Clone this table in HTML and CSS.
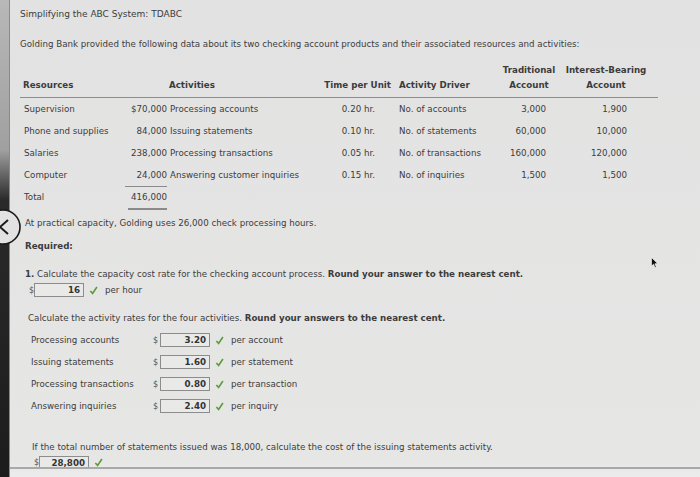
FILE: index.html
```html
<!DOCTYPE html>
<html>
<head>
<meta charset="utf-8">
<link rel="stylesheet" href="styles.css">
</head>
<body>
<div class="screen">
  <div class="edge"></div>
  <div class="page">
    <div class="title">Simplifying the ABC System: TDABC</div>
    <div class="intro">Golding Bank provided the following data about its two checking account products and their associated resources and activities:</div>

    <div class="data">
      <div class="head">
        <div class="h res"></div><div class="h amt"></div><div class="h act"></div><div class="h time"></div><div class="h drv"></div>
        <div class="h trad">Traditional</div><div class="h int">Interest-Bearing</div>
        <div class="h res">Resources</div><div class="h amt"></div><div class="h act c">Activities</div><div class="h time">Time per Unit</div><div class="h drv">Activity Driver</div>
        <div class="h trad">Account</div><div class="h int">Account</div>
      </div>
      <div class="row"><div class="res">Supervision</div><div class="amt">$70,000</div><div class="act">Processing accounts</div><div class="time">0.20 hr.</div><div class="drv">No. of accounts</div><div class="trad">3,000</div><div class="int">1,900</div></div>
      <div class="row"><div class="res">Phone and supplies</div><div class="amt">84,000</div><div class="act">Issuing statements</div><div class="time">0.10 hr.</div><div class="drv">No. of statements</div><div class="trad">60,000</div><div class="int">10,000</div></div>
      <div class="row"><div class="res">Salaries</div><div class="amt">238,000</div><div class="act">Processing transactions</div><div class="time">0.05 hr.</div><div class="drv">No. of transactions</div><div class="trad">160,000</div><div class="int">120,000</div></div>
      <div class="row"><div class="res">Computer</div><div class="amt"><span class="under">24,000</span></div><div class="act">Answering customer inquiries</div><div class="time">0.15 hr.</div><div class="drv">No. of inquiries</div><div class="trad">1,500</div><div class="int">1,500</div></div>
      <div class="row total"><div class="res">Total</div><div class="amt"><span class="dbl">416,000</span></div></div>
    </div>

    <div class="para p1">At practical capacity, Golding uses 26,000 check processing hours.</div>
    <div class="para req"><b>Required:</b></div>
    <div class="para q1"><b>1.</b> Calculate the capacity cost rate for the checking account process. <b>Round your answer to the nearest cent.</b></div>
    <div class="answer a1"><span class="dollar">$</span><span class="box">16</span><svg class="chk" viewBox="0 0 10 10"><path d="M1.5 5.5 L4 8.2 L8.8 1.2"/></svg><span class="unit">per hour</span></div>

    <div class="para q2">Calculate the activity rates for the four activities. <b>Round your answers to the nearest cent.</b></div>
    <div class="rates">
      <div class="rate"><span class="rl">Processing accounts</span><span class="dollar">$</span><span class="box">3.20</span><svg class="chk" viewBox="0 0 10 10"><path d="M1.5 5.5 L4 8.2 L8.8 1.2"/></svg><span class="unit">per account</span></div>
      <div class="rate"><span class="rl">Issuing statements</span><span class="dollar">$</span><span class="box">1.60</span><svg class="chk" viewBox="0 0 10 10"><path d="M1.5 5.5 L4 8.2 L8.8 1.2"/></svg><span class="unit">per statement</span></div>
      <div class="rate"><span class="rl">Processing transactions</span><span class="dollar">$</span><span class="box">0.80</span><svg class="chk" viewBox="0 0 10 10"><path d="M1.5 5.5 L4 8.2 L8.8 1.2"/></svg><span class="unit">per transaction</span></div>
      <div class="rate"><span class="rl">Answering inquiries</span><span class="dollar">$</span><span class="box">2.40</span><svg class="chk" viewBox="0 0 10 10"><path d="M1.5 5.5 L4 8.2 L8.8 1.2"/></svg><span class="unit">per inquiry</span></div>
    </div>

    <div class="para q3">If the total number of statements issued was 18,000, calculate the cost of the issuing statements activity.</div>
    <div class="answer a3"><span class="dollar">$</span><span class="box">28,800</span><svg class="chk" viewBox="0 0 10 10"><path d="M1.5 5.5 L4 8.2 L8.8 1.2"/></svg></div>
  </div>
  <svg class="backbtn" viewBox="0 0 40 44"><circle cx="4" cy="22" r="17"/><path d="M9 15 L1 22 L9 29"/></svg>
  <svg class="cursor" viewBox="0 0 8 12"><path d="M0.5 0.5 L0.5 9 L2.6 7.2 L4 10.5 L5.3 9.9 L3.9 6.8 L6.6 6.6 Z"/></svg>
</div>
</body>
</html>
```
FILE: styles.css
```css
html, body {
  margin: 0;
  padding: 0;
}
body {
  width: 700px;
  height: 477px;
  overflow: hidden;
  background: #e4e4e3;
  font-family: "DejaVu Sans", Verdana, sans-serif;
  font-size: 8.7px;
  color: #3c3c3c;
}
.screen {
  position: relative;
  display: flex;
  width: 700px;
  height: 477px;
  background: linear-gradient(to bottom, #e2e2e2 0, #e6e6e5 460px, #ececec 477px);
}
.edge {
  width: 9px;
  flex: none;
  background: linear-gradient(to bottom, #b8b8b8 0, #a0a0a0 150px, #2a2a2a 200px, #1c1c1c 100%);
  border-right: 1px solid #8a8a8a;
}
.page {
  flex: 1;
  height: 469px;
  padding: 6px 0 0 10px;
  box-sizing: border-box;
  border-bottom: 2px solid #a9a9a9;
  overflow: hidden;
}
.title {
  font-size: 9px;
  line-height: 16px;
}
.intro {
  margin-top: 14px;
  line-height: 16px;
}
.data {
  margin-top: 11px;
  width: 638px;
}
.head {
  display: grid;
  grid-template-columns: 100px 47px 155px 72px 104px 62px 92px;
  grid-auto-rows: 15px;
  line-height: 15px;
  padding-bottom: 4px;
  border-bottom: 1.5px solid #8d8d8d;
  font-weight: bold;
}
.h.res { padding-left: 3px; }
.h.act.c { text-align: left; padding-left: 2px; }
.h.time { text-align: right; padding-right: 3px; }
.h.drv { padding-left: 5px; }
.h.trad { text-align: center; }
.h.int { text-align: center; }
.row {
  display: grid;
  grid-template-columns: 100px 47px 155px 72px 104px 62px 92px;
  height: 22px;
  line-height: 22px;
}
.row .res { padding-left: 4px; }
.row .amt { text-align: right; }
.row .act { padding-left: 3px; }
.row .time { text-align: right; padding-right: 19px; }
.row .drv { padding-left: 5px; }
.row .trad { text-align: right; padding-right: 14px; }
.row .int { text-align: right; padding-right: 25px; }
.under {
  display: inline-block;
  line-height: 22px;
  border-bottom: 1px solid #8a8a8a;
  padding-left: 12px;
}
.row.total {
  height: 22px;
}
.dbl {
  display: inline-block;
  line-height: 21px;
  border-bottom: 2px solid #8a8a8a;
  padding-left: 3px;
}
.para {
  line-height: 16px;
}
.p1 { margin-top: 7px; padding-left: 5px; }
.req { margin-top: 7px; padding-left: 5px; }
.q1 { margin-top: 12px; padding-left: 5px; }
.answer {
  display: flex;
  align-items: center;
  height: 16px;
}
.dollar {
  width: 5px;
  font-size: 8px;
  color: #555;
}
.box {
  box-sizing: border-box;
  width: 50px;
  height: 14px;
  line-height: 12px;
  border: 1px solid #8c8c8c;
  background: #e9e9e8;
  text-align: right;
  padding-right: 3px;
  font-weight: bold;
  color: #333;
}
.chk {
  width: 9px;
  height: 9px;
  margin-left: 5px;
}
.chk path {
  fill: none;
  stroke: #5d9b3c;
  stroke-width: 1.8;
}
.unit {
  margin-left: 7px;
}
.a1 { padding-left: 9px; }
.q2 { margin-top: 12px; padding-left: 8px; }
.rates {
  margin-top: 3px;
  padding-left: 11px;
}
.rate {
  display: flex;
  align-items: center;
  height: 22px;
}
.rl {
  width: 122px;
}
.rate .dollar { width: 7px; }
.q3 { margin-top: 22px; padding-left: 12px; }
.a3 { padding-left: 14px; height: 15px; }
.a3 .box { width: 50px; padding-right: 3px; }
.backbtn {
  position: absolute;
  left: -1px;
  top: 205px;
  width: 40px;
  height: 44px;
}
.backbtn circle {
  fill: #e2e2e2;
  stroke: #1a1a1a;
  stroke-width: 1.6;
}
.backbtn path {
  fill: none;
  stroke: #1a1a1a;
  stroke-width: 2;
}
.cursor {
  position: absolute;
  left: 651px;
  top: 257px;
  width: 8px;
  height: 12px;
}
.cursor path {
  fill: #111;
  stroke: #fff;
  stroke-width: 0.6;
}
```
